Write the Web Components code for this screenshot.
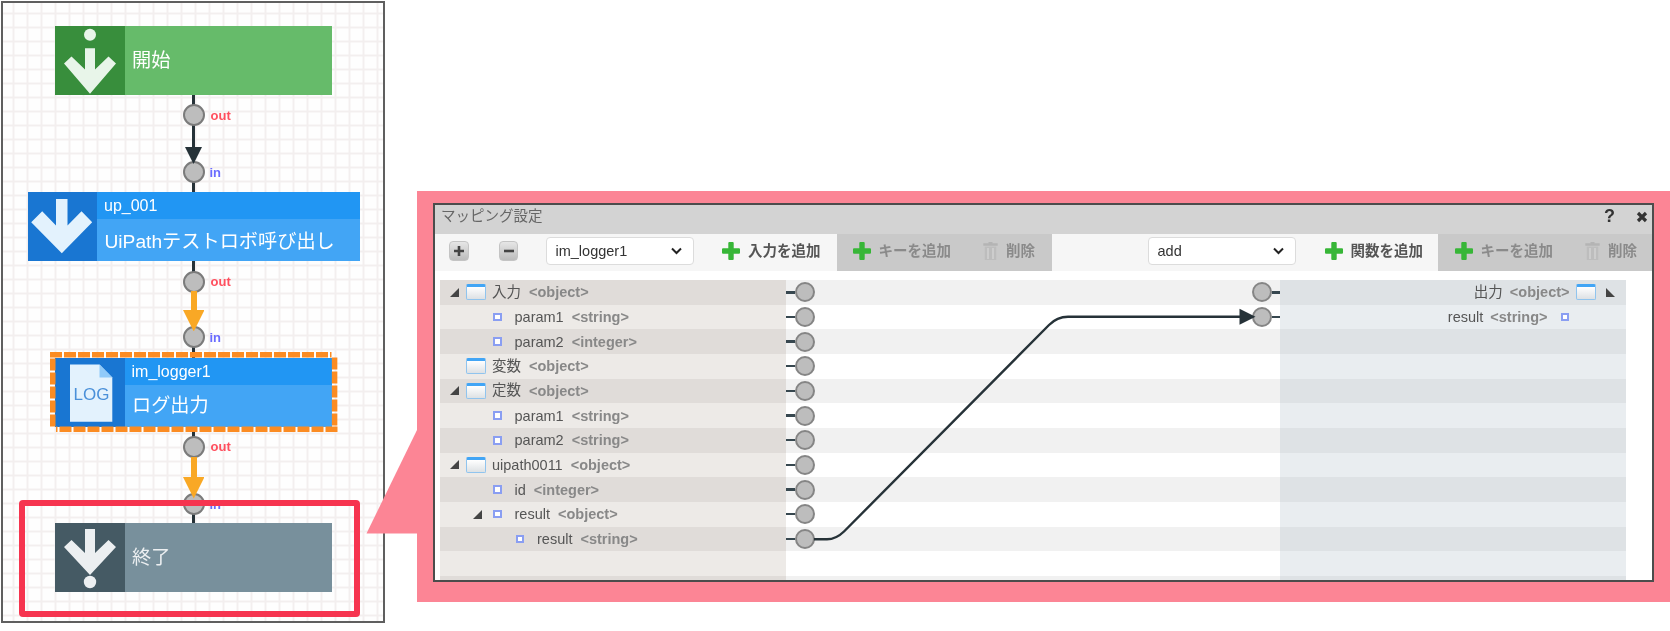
<!DOCTYPE html>
<html lang="ja">
<head>
<meta charset="utf-8">
<title>マッピング設定</title>
<style>
  html, body { margin: 0; background: #fff; }
  body {
    width: 1670px;
    height: 631px;
    overflow: hidden;
    font-family: "Liberation Sans", "Noto Sans CJK JP", sans-serif;
    filter: blur(0.5px);
  }
  #page { display: flex; align-items: flex-start; }
</style>
</head>
<body>
<div id="page">
  <flow-canvas>
    <flow-edge x="193.5" from="95" to="115" color="#263238" width="2.5"></flow-edge>
    <flow-edge x="193.5" from="115" to="150" color="#263238" width="2.5"></flow-edge>
    <flow-edge x="193.5" from="172" to="192" color="#263238" width="2.5"></flow-edge>
    <flow-edge x="193.5" from="260" to="281" color="#263238" width="2.5"></flow-edge>
    <flow-edge x="193.5" from="337" to="358" color="#263238" width="2.5"></flow-edge>
    <flow-edge x="193.5" from="426" to="446" color="#263238" width="2.5"></flow-edge>
    <flow-edge x="193.5" from="504" to="523" color="#263238" width="2.5"></flow-edge>

    <flow-node x="55" y="25.5" kind="start" label="開始">
      <svg slot="icon" width="69" height="69" viewBox="0 0 69 69"><circle cx="35" cy="8.800" r="6" fill="#e8f5e9"/><path fill="#e8f5e9" d="M35 67.800 9 37.500 16.500 30.500 30 43.500V22.200H40V43.500L53.500 30.500 61 37.500z"/></svg>
    </flow-node>
    <flow-node x="27.5" y="191.5" kind="task" name="up_001" label="UiPathテストロボ呼び出し">
      <svg slot="icon" width="69" height="69" viewBox="0 0 69 69"><path fill="#e3f2fd" d="M33.800 61.200 3.200 30.200l11-11L28 33.500V7h11.500v26.500l14-14.300 10.700 11z"/></svg>
    </flow-node>
    <flow-node x="55" y="357.5" kind="task" name="im_logger1" label="ログ出力">
      <span slot="icon" class="log-icon" style="position:relative;display:block;width:69px;height:69px">
        <svg width="69" height="69" viewBox="0 0 69 69" style="position:absolute;left:0;top:0"><path fill="#e3f2fd" d="M15 6.500h29.500L57.300 19.500v44.200H15z"/><path fill="#90caf9" d="M44.500 6.500 57.300 19.500H44.500z"/></svg>
        <span style="position:absolute;left:15px;width:43px;top:27px;text-align:center;font-size:17px;line-height:19px;color:#4a90d9">LOG</span>
      </span>
    </flow-node>
    <flow-node x="55" y="523" kind="end" label="終了">
      <svg slot="icon" width="69" height="69" viewBox="0 0 69 69"><path fill="#eceff1" d="M35 52 9 24 16.500 17 30 30V6H40V30L53.500 17 61 24z"/><circle cx="35" cy="59" r="6.200" fill="#eceff1"/></svg>
    </flow-node>

    <flow-port y="115" label="out" tone="out"></flow-port>
    <flow-port y="172" label="in" tone="in"></flow-port>
    <flow-port y="281.5" label="out" tone="out"></flow-port>
    <flow-port y="337" label="in" tone="in"></flow-port>
    <flow-port y="446.5" label="out" tone="out"></flow-port>
    <flow-port y="504" label="in" tone="in"></flow-port>

    <flow-arrow tip="163.5" size="17" color="#263238"></flow-arrow>
    <flow-edge x="193.5" from="291" to="313" color="#f9a825" width="6"></flow-edge>
    <flow-arrow tip="331" size="21.5" color="#f9a825"></flow-arrow>
    <flow-edge x="193.5" from="457" to="480" color="#f9a825" width="6"></flow-edge>
    <flow-arrow tip="498.5" size="21.5" color="#f9a825"></flow-arrow>

    <flow-selection></flow-selection>
    <flow-highlight></flow-highlight>
  </flow-canvas>

  <map-callout>
    <map-panel title-text="マッピング設定">
      <map-square slot="toolbar" glyph="plus"></map-square>
      <map-square slot="toolbar" glyph="minus" style="margin-left:30px"></map-square>
      <map-select slot="toolbar" value="im_logger1" style="margin-left:28px"></map-select>
      <map-tab slot="toolbar" width="143" pad="28"><map-action label="入力を追加"></map-action></map-tab>
      <map-tab slot="toolbar" width="214.5" pad="15.5" muted>
        <map-action label="キーを追加" muted></map-action>
        <map-action label="削除" icon="trash" muted style="margin-left:32px"></map-action>
      </map-tab>
      <map-select slot="toolbar" value="add" style="margin-left:96.5px"></map-select>
      <map-tab slot="toolbar" width="142" pad="28.5"><map-action label="関数を追加"></map-action></map-tab>
      <map-tab slot="toolbar" width="215.5" pad="16.5" muted>
        <map-action label="キーを追加" muted></map-action>
        <map-action label="削除" icon="trash" muted style="margin-left:32px"></map-action>
      </map-tab>

      <map-row slot="left" level="0" kind="window" toggle name="入力" type="&lt;object&gt;"></map-row>
      <map-row slot="left" level="1" name="param1" type="&lt;string&gt;"></map-row>
      <map-row slot="left" level="1" name="param2" type="&lt;integer&gt;"></map-row>
      <map-row slot="left" level="0" kind="window" name="変数" type="&lt;object&gt;"></map-row>
      <map-row slot="left" level="0" kind="window" toggle name="定数" type="&lt;object&gt;"></map-row>
      <map-row slot="left" level="1" name="param1" type="&lt;string&gt;"></map-row>
      <map-row slot="left" level="1" name="param2" type="&lt;string&gt;"></map-row>
      <map-row slot="left" level="0" kind="window" toggle name="uipath0011" type="&lt;object&gt;"></map-row>
      <map-row slot="left" level="1" name="id" type="&lt;integer&gt;"></map-row>
      <map-row slot="left" level="1" toggle name="result" type="&lt;object&gt;"></map-row>
      <map-row slot="left" level="2" name="result" type="&lt;string&gt;"></map-row>

      <map-ports slot="center" right></map-ports>
      <map-ports slot="center" right></map-ports>
      <map-ports slot="center"></map-ports>
      <map-ports slot="center"></map-ports>
      <map-ports slot="center"></map-ports>
      <map-ports slot="center"></map-ports>
      <map-ports slot="center"></map-ports>
      <map-ports slot="center"></map-ports>
      <map-ports slot="center"></map-ports>
      <map-ports slot="center"></map-ports>
      <map-ports slot="center"></map-ports>

      <map-row slot="right" side="right" kind="window" toggle name="出力" type="&lt;object&gt;"></map-row>
      <map-row slot="right" side="right" name="result" type="&lt;string&gt;"></map-row>
    </map-panel>
  </map-callout>
</div>

<script>
const ROW_HEIGHT = 'calc(74px / 3)';
const FONT = '"Liberation Sans", "Noto Sans CJK JP", sans-serif';
const ALL_CJK = /^[^\x00-\x7f]+$/;

class FlowCanvas extends HTMLElement {
  constructor() {
    super();
    this.attachShadow({ mode: 'open' });
  }

  connectedCallback() {
    this.shadowRoot.innerHTML = `
      <style>
        :host {
          display: block;
          position: relative;
          flex: none;
          box-sizing: border-box;
          width: 384px;
          height: 621.5px;
          margin: 1px 0 0 1px;
          border: 2px solid #5f5f5f;
          background-color: #fefefe;
          background-image:
            linear-gradient(#f3efef 2px, transparent 2px),
            linear-gradient(90deg, #f3efef 2px, transparent 2px);
          background-size: 14px 14px;
          background-position: 9.5px 9.5px;
        }
        /* children use page coordinates, border box starts at 1,1 plus 2px border */
        .layer { position: absolute; left: -3px; top: -3px; }
      </style>
      <div class="layer"><slot></slot></div>
    `;
  }
}

class FlowNode extends HTMLElement {
  constructor() {
    super();
    this.attachShadow({ mode: 'open' });
  }

  connectedCallback() {
    const name = this.getAttribute('name');
    const label = this.getAttribute('label');
    this.style.left = `${this.getAttribute('x')}px`;
    this.style.top = `${this.getAttribute('y')}px`;
    this.shadowRoot.innerHTML = `
      <style>
        :host {
          display: flex;
          position: absolute;
          width: 277px;
          height: 69px;
          color: #fff;
          font-family: ${FONT};
          --icon-bg: #1976d2;
          --head-bg: #2196f3;
          --body-bg: #42a5f5;
        }
        :host([kind="start"]) { --icon-bg: #388e3c; --body-bg: #66bb6a; }
        :host([kind="end"]) { --icon-bg: #455a64; --body-bg: #78909c; color: #eceff1; }
        :host([name="up_001"]) { width: 332.5px; }
        .icon { flex: none; width: 69.5px; height: 69px; background: var(--icon-bg); }
        .main { flex: 1; min-width: 0; display: flex; flex-direction: column; background: var(--body-bg); }
        .head {
          flex: none;
          height: 27.5px;
          line-height: 28px;
          padding-left: 7px;
          font-size: 16px;
          background: var(--head-bg);
          white-space: nowrap;
        }
        .label {
          flex: 1;
          display: flex;
          align-items: center;
          padding-left: 7.5px;
          font-size: 19.2px;
          white-space: nowrap;
        }
        .cjk { margin-bottom: 3px; }
      </style>
      <div class="icon"><slot name="icon"></slot></div>
      <div class="main">
        ${name ? `<div class="head">${name}</div>` : ''}
        <div class="label"><span class="${ALL_CJK.test(label) ? 'cjk' : ''}">${label}</span></div>
      </div>
    `;
  }
}

class FlowPort extends HTMLElement {
  constructor() {
    super();
    this.attachShadow({ mode: 'open' });
  }

  connectedCallback() {
    this.style.top = `${this.getAttribute('y') - 11}px`;
    this.shadowRoot.innerHTML = `
      <style>
        :host {
          display: flex;
          align-items: center;
          position: absolute;
          left: 182.5px;
          height: 22px;
          gap: 6px;
          font: bold 13px ${FONT};
          color: #ff4f5e;
        }
        :host([tone="in"]) { color: #6a6cff; gap: 5px; }
        .dot {
          flex: none;
          box-sizing: border-box;
          width: 22px;
          height: 22px;
          border-radius: 50%;
          background: #bdbdbd;
          border: 2.5px solid #7b7b7b;
        }
      </style>
      <div class="dot"></div><span>${this.getAttribute('label')}</span>
    `;
  }
}

class FlowEdge extends HTMLElement {
  constructor() {
    super();
    this.attachShadow({ mode: 'open' });
  }

  connectedCallback() {
    const from = Number(this.getAttribute('from'));
    const to = Number(this.getAttribute('to'));
    const w = Number(this.getAttribute('width'));
    this.style.cssText += `;left:${this.getAttribute('x') - w / 2}px;top:${from}px;width:${w}px;height:${to - from}px;background:${this.getAttribute('color')}`;
    this.shadowRoot.innerHTML = '<style>:host { display: block; position: absolute; }</style>';
  }
}

class FlowArrow extends HTMLElement {
  constructor() {
    super();
    this.attachShadow({ mode: 'open' });
  }

  connectedCallback() {
    const size = Number(this.getAttribute('size'));
    const tip = Number(this.getAttribute('tip'));
    this.style.cssText += `;left:${193.5 - size / 2}px;top:${tip - size}px`;
    this.shadowRoot.innerHTML = `
      <style>:host { display: block; position: absolute; line-height: 0; }</style>
      <svg width="${size}" height="${size}" viewBox="0 0 ${size} ${size}">
        <polygon points="0,0 ${size},0 ${size / 2},${size}" fill="${this.getAttribute('color')}"/>
      </svg>
    `;
  }
}

// dashed selection frame round the im_logger1 node
class FlowSelection extends HTMLElement {
  constructor() {
    super();
    this.attachShadow({ mode: 'open' });
  }

  connectedCallback() {
    this.shadowRoot.innerHTML = `
      <style>:host { display: block; position: absolute; left: 50px; top: 352px; line-height: 0; }</style>
      <svg width="288" height="80" viewBox="0 0 288 80" fill="none" stroke="#fb8c23" stroke-width="5.5" stroke-dasharray="12 2">
        <path d="M0 2.75H281.5"/>
        <path d="M284.6 5.5V74.5"/>
        <path d="M287.5 77H6" transform="translate(0 .2)"/>
        <path d="M2.75 74.5V.5"/>
      </svg>
    `;
  }
}

class FlowHighlight extends HTMLElement {
  constructor() {
    super();
    this.attachShadow({ mode: 'open' });
  }

  connectedCallback() {
    this.shadowRoot.innerHTML = `
      <style>
        :host {
          display: block;
          position: absolute;
          left: 19px;
          top: 500px;
          box-sizing: border-box;
          width: 341px;
          height: 117px;
          border: 6.5px solid #f6344f;
          border-radius: 4px;
        }
      </style>
    `;
  }
}

class MapCallout extends HTMLElement {
  constructor() {
    super();
    this.attachShadow({ mode: 'open' });
  }

  connectedCallback() {
    this.shadowRoot.innerHTML = `
      <style>
        :host {
          display: block;
          position: relative;
          flex: none;
          box-sizing: border-box;
          width: 1253.5px;
          height: 411.5px;
          margin: 190.5px 0 0 31.5px;
          padding: 12.5px 16px 20.5px 16.5px;
          background: #fc8595;
        }
        svg { position: absolute; left: -50.5px; top: 239px; }
      </style>
      <svg width="51" height="104" viewBox="0 0 51 104"><polygon points="51,0 0.5,103.5 51,103.5" fill="#fc8595"/></svg>
      <slot></slot>
    `;
  }
}

class MapPanel extends HTMLElement {
  constructor() {
    super();
    this.attachShadow({ mode: 'open' });
  }

  connectedCallback() {
    this.shadowRoot.innerHTML = `
      <style>
        :host {
          display: flex;
          flex-direction: column;
          box-sizing: border-box;
          height: 378.5px;
          border: 2px solid #4c4c4c;
          background: #fff;
          overflow: hidden;
          font-family: ${FONT};
        }
        .title {
          flex: none;
          height: 29px;
          display: flex;
          align-items: center;
          padding: 0 4px 0 6px;
          background: #d3d3d3;
          color: #666;
          font-size: 14.5px;
        }
        .title span { flex: 1; margin-bottom: 10px; }
        .title b { font-size: 18px; color: #333; margin: 0 21px 6px 0; }
        .title svg { flex: none; margin-bottom: 6px; }
        .toolbar {
          flex: none;
          height: 37px;
          display: flex;
          align-items: center;
          padding-left: 14px;
          background: #f6f6f6;
        }
        .columns {
          flex: 1;
          min-height: 0;
          display: grid;
          grid-template-columns: 346px 494.5px 346px;
          padding: 9px 0 0 4.5px;
        }
        .col { display: flex; flex-direction: column; }
        .left { background: repeating-linear-gradient(#e0dcd9 0 ${ROW_HEIGHT}, #edeae7 ${ROW_HEIGHT} calc(148px / 3)); }
        .center { position: relative; background: repeating-linear-gradient(#f1f1f1 0 ${ROW_HEIGHT}, #fff ${ROW_HEIGHT} calc(148px / 3)); }
        .right { background: repeating-linear-gradient(#dee2e5 0 ${ROW_HEIGHT}, #e9edf0 ${ROW_HEIGHT} calc(148px / 3)); }
        .wire { position: absolute; left: 0; top: 0; }
      </style>
      <div class="title">
        <span>${this.getAttribute('title-text')}</span><b>?</b>
        <svg width="12" height="12" viewBox="0 0 12 12"><path d="M2 2l8 8M10 2l-8 8" stroke="#333" stroke-width="3.2" fill="none"/></svg>
      </div>
      <div class="toolbar"><slot name="toolbar"></slot></div>
      <div class="columns">
        <div class="col left"><slot name="left"></slot></div>
        <div class="col center">
          <slot name="center"></slot>
          <svg class="wire" width="495" height="290" viewBox="0 0 495 290" fill="none">
            <path stroke="#263238" stroke-width="2.4" d="M28 259.3H41Q50 259.3 58 251.5L263 45Q271 36.7 282 36.7H456"/>
            <polygon fill="#263238" points="453.5,28.7 469.5,36.7 453.5,44.7"/>
          </svg>
        </div>
        <div class="col right"><slot name="right"></slot></div>
      </div>
    `;
  }
}

class MapSquare extends HTMLElement {
  constructor() {
    super();
    this.attachShadow({ mode: 'open' });
  }

  connectedCallback() {
    const bar = this.getAttribute('glyph') === 'plus' ? 'M5 10h10M10 5v10' : 'M5 10h10';
    this.shadowRoot.innerHTML = `
      <style>
        :host {
          display: block;
          flex: none;
          box-sizing: border-box;
          width: 19.5px;
          height: 20px;
          margin-bottom: 4px;
          line-height: 0;
          border-radius: 4px;
          border: 1px solid #c4c4c4;
          background: linear-gradient(#e6e6e6, #bcbcbc);
        }
      </style>
      <svg width="18" height="18" viewBox="1 1 18 18"><path d="${bar}" stroke="#444" stroke-width="2.6" fill="none"/></svg>
    `;
  }
}

class MapSelect extends HTMLElement {
  constructor() {
    super();
    this.attachShadow({ mode: 'open' });
  }

  connectedCallback() {
    this.shadowRoot.innerHTML = `
      <style>
        :host {
          display: flex;
          align-items: center;
          justify-content: space-between;
          flex: none;
          box-sizing: border-box;
          width: 148px;
          height: 28px;
          margin-bottom: 4px;
          padding: 0 11px 0 8.5px;
          background: #fff;
          border: 1px solid #dcdcdc;
          border-radius: 4px;
          color: #333;
          font-size: 14.5px;
        }
      </style>
      <span>${this.getAttribute('value')}</span>
      <svg width="11" height="8" viewBox="0 0 11 8"><path d="M1 1.5 5.5 6 10 1.5" fill="none" stroke="#222" stroke-width="2"/></svg>
    `;
  }
}

class MapTab extends HTMLElement {
  constructor() {
    super();
    this.attachShadow({ mode: 'open' });
  }

  connectedCallback() {
    this.style.width = `${this.getAttribute('width')}px`;
    this.style.paddingLeft = `${this.getAttribute('pad')}px`;
    this.shadowRoot.innerHTML = `
      <style>
        :host {
          display: flex;
          align-items: center;
          flex: none;
          box-sizing: border-box;
          height: 37px;
          padding-bottom: 4px;
        }
        :host([muted]) { background: #c9c9c9; }
      </style>
      <slot></slot>
    `;
  }
}

class MapAction extends HTMLElement {
  constructor() {
    super();
    this.attachShadow({ mode: 'open' });
  }

  connectedCallback() {
    const trash = `
      <svg width="15" height="18" viewBox="0 0 15 18">
        <path fill="#b4b4b4" d="M5.5 0h4v1.2h5.2v2.6H.3V1.2h5.2z"/>
        <path fill="#bdbdbd" d="M1.8 4.6h11.4V18H1.8z"/>
        <path stroke="#d4d4d4" stroke-width="1.4" d="M5 6v11M10 6v11"/>
      </svg>`;
    const plus = `
      <svg width="18" height="18" viewBox="0 0 18 18">
        <path fill="#37b637" d="M6.3 1q0-1 1-1h3.4q1 0 1 1v5.3H17q1 0 1 1v3.4q0 1-1 1h-5.3V17q0 1-1 1H7.300q-1 0-1-1v-5.300H1q-1 0-1-1V7.300q0-1 1-1h5.300z"/>
      </svg>`;
    this.shadowRoot.innerHTML = `
      <style>
        :host {
          display: flex;
          align-items: center;
          gap: 8px;
          font-size: 14.5px;
          font-weight: bold;
          color: #555;
          white-space: nowrap;
        }
        :host([muted]) { color: #8a8a8a; }
        svg { flex: none; display: block; }
        span { margin-bottom: 3px; }
      </style>
      ${this.getAttribute('icon') === 'trash' ? trash : plus}<span>${this.getAttribute('label')}</span>
    `;
  }
}

class MapRow extends HTMLElement {
  constructor() {
    super();
    this.attachShadow({ mode: 'open' });
  }

  connectedCallback() {
    const side = this.getAttribute('side') || 'left';
    const isWindow = this.getAttribute('kind') === 'window';
    const hasToggle = this.hasAttribute('toggle');
    const level = Number(this.getAttribute('level') || 0);
    const name = this.getAttribute('name');
    const icon = isWindow ? '<i class="window"></i>' : '<i class="square"></i>';
    const text = `<span class="name ${ALL_CJK.test(name) ? 'cjk' : ''}">${name}</span><span class="type">${this.getAttribute('type').replace('<', '&lt;')}</span>`;

    let body;
    if (side === 'left') {
      const pad = isWindow ? 10.5 : 33 + 22.5 * (level - 1);
      const toggle = `<svg class="toggle" style="visibility:${hasToggle ? 'visible' : 'hidden'}" width="9" height="9" viewBox="0 0 9 9"><polygon points="0,9 9,9 9,0" fill="#444"/></svg>`;
      this.style.paddingLeft = `${pad}px`;
      body = `${toggle}<span class="g1"></span>${icon}<span class="g2"></span>${text}`;
    } else {
      const toggle = `<svg class="toggle" width="9" height="9" viewBox="0 0 9 9"><polygon points="0,0 0,9 9,9" fill="#444"/></svg>`;
      this.style.justifyContent = 'flex-end';
      this.style.paddingRight = isWindow ? '11px' : '57px';
      body = isWindow
        ? `${text}<span style="width:6.5px"></span>${icon}<span style="width:10px"></span>${toggle}`
        : `${text}<span style="width:13px"></span>${icon}`;
    }

    this.shadowRoot.innerHTML = `
      <style>
        :host {
          display: flex;
          align-items: center;
          flex: none;
          height: ${ROW_HEIGHT};
          font-size: 14.5px;
          white-space: nowrap;
          color: #555;
        }
        .name { margin-right: 8px; }
        .cjk { margin-bottom: 4px; }
        .type { font-weight: bold; color: #888; }
        :host([side="right"]) .name { margin-right: 7px; }
        i { display: block; flex: none; box-sizing: border-box; }
        .toggle { flex: none; }
        .g1 { width: ${isWindow ? 6.5 : 11.5}px; flex: none; }
        .g2 { width: ${isWindow ? 6.5 : 13}px; flex: none; }
        .window {
          width: 20px;
          height: 16px;
          border: 1px solid #90c4ee;
          border-top: 3px solid #42a5f5;
          border-radius: 2px;
          background: linear-gradient(#fff, #dde1e4);
        }
        .square {
          width: 8.5px;
          height: 8.5px;
          border: 2px solid #8a9ef2;
          background: #fff;
        }
      </style>
      ${body}
    `;
  }
}

class MapPorts extends HTMLElement {
  constructor() {
    super();
    this.attachShadow({ mode: 'open' });
  }

  connectedCallback() {
    this.shadowRoot.innerHTML = `
      <style>
        :host {
          display: flex;
          align-items: center;
          justify-content: space-between;
          flex: none;
          height: ${ROW_HEIGHT};
        }
        .port { display: flex; align-items: center; }
        .stub { width: 9px; height: 2.4px; background: #37474f; }
        .dot {
          box-sizing: border-box;
          width: 20px;
          height: 20px;
          border-radius: 50%;
          background: #bdbdbd;
          border: 2.5px solid #858585;
        }
        .end { width: 8px; }
      </style>
      <div class="port"><div class="stub"></div><div class="dot"></div></div>
      ${this.hasAttribute('right') ? '<div class="port"><div class="dot"></div><div class="stub end"></div></div>' : ''}
    `;
  }
}

customElements.define('flow-canvas', FlowCanvas);
customElements.define('flow-node', FlowNode);
customElements.define('flow-port', FlowPort);
customElements.define('flow-edge', FlowEdge);
customElements.define('flow-arrow', FlowArrow);
customElements.define('flow-selection', FlowSelection);
customElements.define('flow-highlight', FlowHighlight);
customElements.define('map-callout', MapCallout);
customElements.define('map-panel', MapPanel);
customElements.define('map-square', MapSquare);
customElements.define('map-select', MapSelect);
customElements.define('map-tab', MapTab);
customElements.define('map-action', MapAction);
customElements.define('map-row', MapRow);
customElements.define('map-ports', MapPorts);
</script>
</body>
</html>
